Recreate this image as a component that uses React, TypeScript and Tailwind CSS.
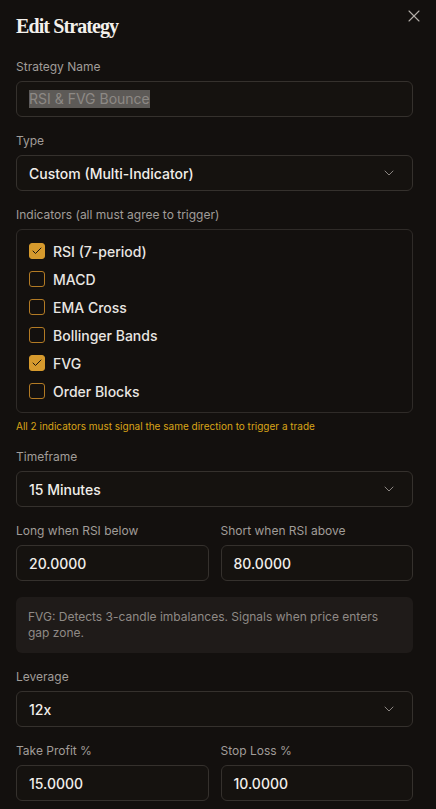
import { X, ChevronDown, Check } from "lucide-react";

const indicators = [
  { name: "RSI (7-period)", checked: true },
  { name: "MACD", checked: false },
  { name: "EMA Cross", checked: false },
  { name: "Bollinger Bands", checked: false },
  { name: "FVG", checked: true },
  { name: "Order Blocks", checked: false },
];

function Label({ children }: { children: React.ReactNode }) {
  return <div className="text-[12px] leading-4 text-[#a19d99] mb-[6px]">{children}</div>;
}

function Select({ value }: { value: string }) {
  return (
    <div className="h-[36px] rounded-md border border-[#35312d] bg-[#15120f] px-[12px] flex items-center justify-between">
      <span className="text-[14px] font-medium text-[#f1eeea]">{value}</span>
      <ChevronDown className="w-4 h-4 text-[#8a8581] mr-[3px]" strokeWidth={1.5} />
    </div>
  );
}

function NumInput({ value }: { value: string }) {
  return (
    <div className="h-[36px] rounded-md border border-[#35312d] bg-[#15120f] px-[12px] flex items-center">
      <span className="text-[14px] font-medium text-[#f1eeea]">{value}</span>
    </div>
  );
}

export default function App() {
  return (
    <div className="min-h-screen bg-[#13100e] pl-4 pr-[23px] pt-[14px] pb-4 relative" style={{ fontFamily: "Inter, 'Noto Sans', sans-serif" }}>
      <button className="absolute top-[6px] right-[12px] text-[#b3aea9]">
        <X className="w-5 h-5" strokeWidth={1.3} />
      </button>
      <h1 className="text-[20px] leading-6 font-bold tracking-[-0.9px] text-[#f3f0ec] mb-[21px]" style={{ fontFamily: "'Liberation Serif', 'DejaVu Serif', serif" }}>
        Edit Strategy
      </h1>

      <div className="mb-4">
        <Label>Strategy Name</Label>
        <div className="h-[36px] rounded-md border border-[#35312d] bg-[#15120f] px-[12px] flex items-center">
          <span className="text-[14px] leading-[18px] text-[#8d8985] bg-[#5d5a57]">RSI &amp; FVG Bounce</span>
        </div>
      </div>

      <div className="mb-4">
        <Label>Type</Label>
        <Select value="Custom (Multi-Indicator)" />
      </div>

      <div className="mb-[15px]">
        <Label>Indicators (all must agree to trigger)</Label>
        <div className="rounded-md border border-[#2f2b28] px-[12px] py-[13px] flex flex-col gap-[12px]">
          {indicators.map((ind) => (
            <div key={ind.name} className="flex items-center gap-[8px] h-4">
              <div
                className={
                  ind.checked
                    ? "w-4 h-4 rounded-[3px] bg-[#d69a2d] border border-[#d69a2d] flex items-center justify-center"
                    : "w-4 h-4 rounded-[3px] border border-[#b27a24] flex items-center justify-center"
                }
              >
                {ind.checked && <Check className="w-3 h-3 text-[#1a1510]" strokeWidth={2} />}
              </div>
              <span className="text-[14px] font-medium text-[#e9e6e2]">{ind.name}</span>
            </div>
          ))}
        </div>
        <div className="text-[10px] leading-4 text-[#d9a418] mt-[5px]">
          All 2 indicators must signal the same direction to trigger a trade
        </div>
      </div>

      <div className="mb-4">
        <Label>Timeframe</Label>
        <Select value="15 Minutes" />
      </div>

      <div className="grid grid-cols-2 gap-3 mb-4">
        <div>
          <Label>Long when RSI below</Label>
          <NumInput value="20.0000" />
        </div>
        <div>
          <Label>Short when RSI above</Label>
          <NumInput value="80.0000" />
        </div>
      </div>

      <div className="rounded-md bg-[#1f1b19] px-[12px] py-[12px] text-[12px] leading-4 text-[#8f8a86] mb-4">
        FVG: Detects 3-candle imbalances. Signals when price enters gap zone.
      </div>

      <div className="mb-4">
        <Label>Leverage</Label>
        <Select value="12x" />
      </div>

      <div className="grid grid-cols-2 gap-3">
        <div>
          <Label>Take Profit %</Label>
          <NumInput value="15.0000" />
        </div>
        <div>
          <Label>Stop Loss %</Label>
          <NumInput value="10.0000" />
        </div>
      </div>
    </div>
  );
}
